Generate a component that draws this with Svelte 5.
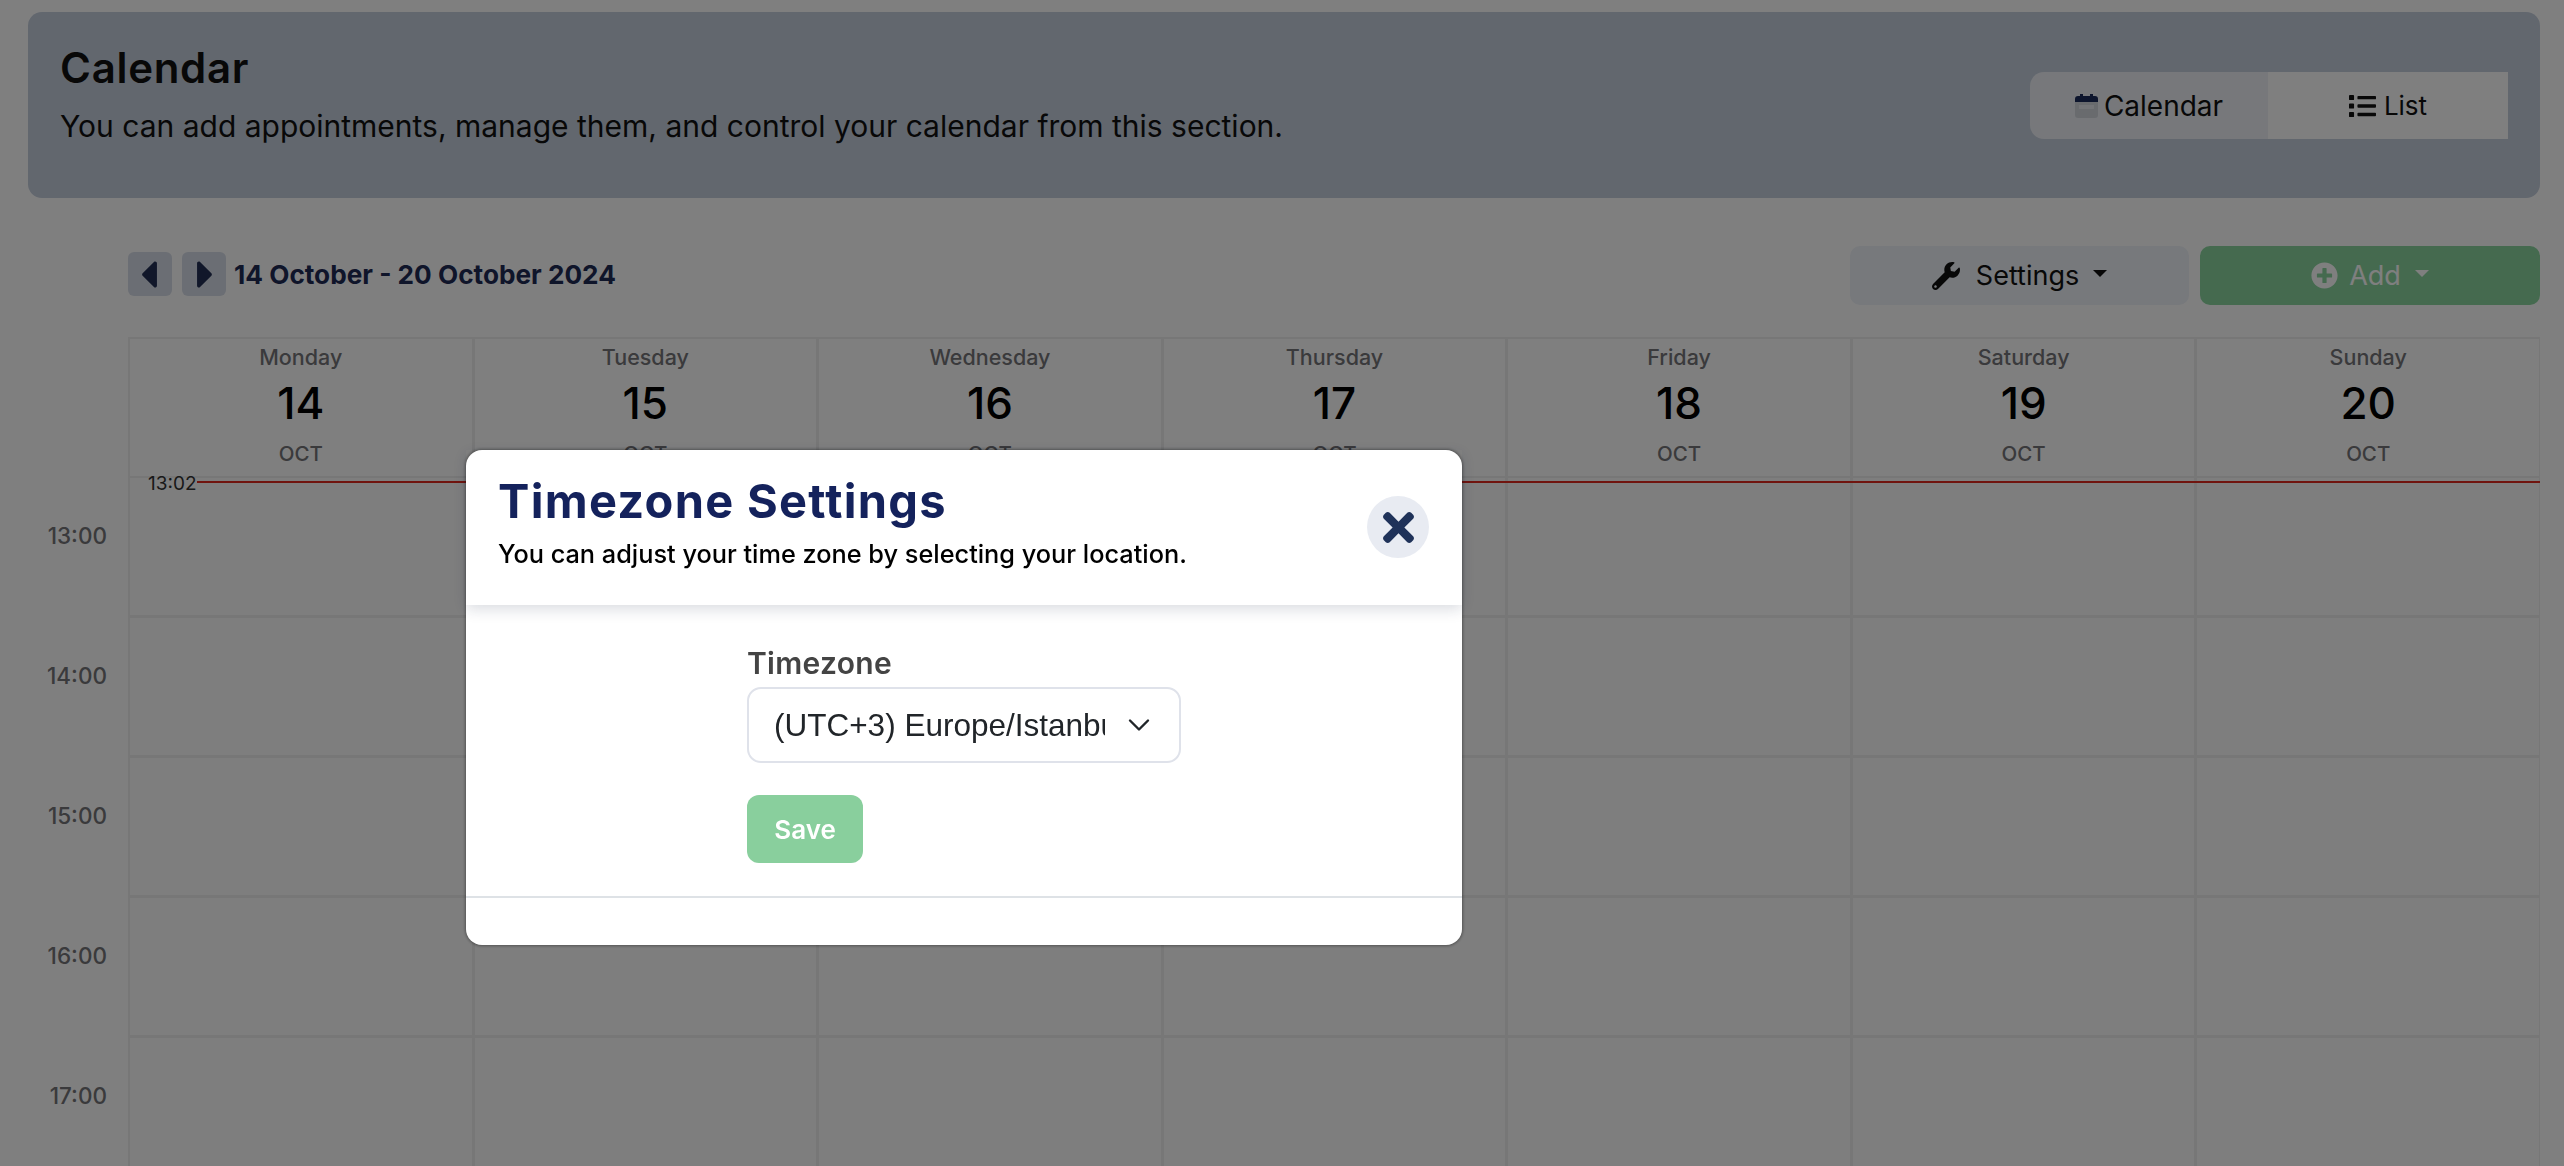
<script>
  const days = [
    { name: 'Monday', num: 14 },
    { name: 'Tuesday', num: 15 },
    { name: 'Wednesday', num: 16 },
    { name: 'Thursday', num: 17 },
    { name: 'Friday', num: 18 },
    { name: 'Saturday', num: 19 },
    { name: 'Sunday', num: 20 }
  ];
  const hours = ['13:00', '14:00', '15:00', '16:00', '17:00'];
</script>

<div class="page">
  <header class="banner">
    <div>
      <h1>Calendar</h1>
      <p>You can add appointments, manage them, and control your calendar from this section.</p>
    </div>
    <div class="toggle">
      <button class="tab active">
        <svg class="cal" viewBox="0 0 23 25" aria-hidden="true">
          <path fill="#d3d6dd" d="M0 9h23v13a3 3 0 0 1-3 3H3a3 3 0 0 1-3-3z" />
          <rect x="4" y="12" width="15" height="4" fill="#e6e8ee" />
          <path fill="#1a2a5a" d="M0 9V6a3 3 0 0 1 3-3h2V1h3v2h7V1h3v2h2a3 3 0 0 1 3 3v3z" />
        </svg>
        Calendar
      </button>
      <button class="tab">
        <svg class="list" viewBox="0 48 512 416" aria-hidden="true">
          <path d="M80 368H16a16 16 0 0 0-16 16v64a16 16 0 0 0 16 16h64a16 16 0 0 0 16-16v-64a16 16 0 0 0-16-16zm0-320H16A16 16 0 0 0 0 64v64a16 16 0 0 0 16 16h64a16 16 0 0 0 16-16V64a16 16 0 0 0-16-16zm0 160H16a16 16 0 0 0-16 16v64a16 16 0 0 0 16 16h64a16 16 0 0 0 16-16v-64a16 16 0 0 0-16-16zm416 176H176a16 16 0 0 0-16 16v32a16 16 0 0 0 16 16h320a16 16 0 0 0 16-16v-32a16 16 0 0 0-16-16zm0-320H176a16 16 0 0 0-16 16v32a16 16 0 0 0 16 16h320a16 16 0 0 0 16-16V80a16 16 0 0 0-16-16zm0 160H176a16 16 0 0 0-16 16v32a16 16 0 0 0 16 16h320a16 16 0 0 0 16-16v-32a16 16 0 0 0-16-16z" />
        </svg>
        List
      </button>
    </div>
  </header>

  <div class="toolbar">
    <div class="nav">
      <button class="arrow prev" aria-label="Previous">
        <svg viewBox="0 0 192 512"><path d="M192 127.338v257.324c0 17.818-21.543 26.741-34.142 14.142L29.196 270.142c-7.81-7.81-7.81-20.474 0-28.284l128.662-128.662c12.599-12.6 34.142-3.676 34.142 14.142z" /></svg>
      </button>
      <button class="arrow next" aria-label="Next">
        <svg viewBox="0 0 192 512"><path d="M0 384.662V127.338c0-17.818 21.543-26.741 34.142-14.142l128.662 128.662c7.81 7.81 7.81 20.474 0 28.284L34.142 398.804C21.543 411.404 0 402.48 0 384.662z" /></svg>
      </button>
      <strong class="range">14 October - 20 October 2024</strong>
    </div>
    <div class="actions">
      <button class="action settings">
        <svg class="ic" viewBox="0 0 512 512"><path d="M507.73 109.1c-2.24-9.03-13.54-12.09-20.12-5.51l-74.36 74.36-67.88-11.31-11.31-67.88 74.36-74.36c6.62-6.62 3.43-17.9-5.66-20.16-47.38-11.74-99.55.91-136.58 37.93-39.64 39.64-50.55 97.1-34.05 147.2L18.74 402.76c-24.99 24.99-24.99 65.51 0 90.5 24.99 24.99 65.51 24.99 90.5 0l213.21-213.21c50.12 16.71 107.47 5.68 147.37-34.22 37.07-37.07 49.7-89.32 37.91-136.73zM64 472c-13.25 0-24-10.75-24-24 0-13.26 10.75-24 24-24s24 10.74 24 24c0 13.25-10.75 24-24 24z" /></svg>
        <span class="lbl">Settings</span>
        <i class="caret"></i>
      </button>
      <button class="action add">
        <svg class="ic" viewBox="0 0 512 512"><path d="M256 8C119 8 8 119 8 256s111 248 248 248 248-111 248-248S393 8 256 8zm144 276c0 6.6-5.4 12-12 12h-92v92c0 6.6-5.4 12-12 12h-56c-6.6 0-12-5.4-12-12v-92h-92c-6.6 0-12-5.4-12-12v-56c0-6.6 5.4-12 12-12h92v-92c0-6.6 5.4-12 12-12h56c6.6 0 12 5.4 12 12v92h92c6.6 0 12 5.4 12 12v56z" /></svg>
        <span class="lbl">Add</span>
        <i class="caret"></i>
      </button>
    </div>
  </div>

  <section class="cal-grid">
    <div class="corner"></div>
    {#each days as d}
      <div class="day">
        <span class="dname">{d.name}</span>
        <span class="dnum">{d.num}</span>
        <span class="dmon">OCT</span>
      </div>
    {/each}
    <div class="now">
      <span class="now-label">13:02</span>
      <span class="now-line"></span>
    </div>
    {#each hours as h}
      <div class="hour"><span>{h}</span></div>
      {#each days as d}
        <div class="slot"></div>
      {/each}
    {/each}
  </section>
</div>

<div class="backdrop"></div>

<div class="modal" role="dialog">
  <div class="m-head">
    <div>
      <h2>Timezone Settings</h2>
      <p>You can adjust your time zone by selecting your location.</p>
    </div>
    <button class="close" aria-label="Close">
      <svg viewBox="0 0 352 512"><path d="M242.72 256l100.07-100.07c12.28-12.28 12.28-32.19 0-44.48l-22.24-22.24c-12.28-12.28-32.19-12.28-44.48 0L176 189.28 75.93 89.21c-12.28-12.28-32.19-12.28-44.48 0L9.21 111.45c-12.28 12.28-12.28 32.19 0 44.48L109.28 256 9.21 356.07c-12.28 12.28-12.28 32.19 0 44.48l22.24 22.24c12.28 12.28 32.2 12.28 44.48 0L176 322.72l100.07 100.07c12.28 12.28 32.2 12.28 44.48 0l22.24-22.24c12.28-12.28 12.28-32.19 0-44.48L242.72 256z" /></svg>
    </button>
  </div>
  <div class="m-body">
    <label for="tz">Timezone</label>
    <div class="select-wrap">
      <select id="tz">
        <option>(UTC+3) Europe/Istanbul</option>
      </select>
      <svg class="chev" viewBox="0 0 16 16"><path d="M2 5l6 6 6-6" fill="none" stroke="#212529" stroke-width="1.6" stroke-linecap="round" stroke-linejoin="round" /></svg>
    </div>
    <button class="save">Save</button>
  </div>
  <div class="m-foot"></div>
</div>

<style>
  :global(body) {
    margin: 0;
    background: #fff;
    font-family: Inter, "Noto Sans", sans-serif;
    overflow: hidden;
  }
  button {
    font-family: inherit;
    border: 0;
    padding: 0;
    margin: 0;
    color: inherit;
  }
  .page {
    height: 1166px;
    overflow: hidden;
    padding-top: 12px;
    box-sizing: border-box;
  }
  .banner {
    margin: 0 24px 0 28px;
    height: 186px;
    box-sizing: border-box;
    background: #c4cedd;
    border-radius: 14px;
    padding: 0 32px;
    display: flex;
    align-items: center;
    justify-content: space-between;
  }
  .banner > div:first-child {
    margin-bottom: 18px;
  }
  h1 {
    margin: 0 0 16px;
    font-size: 42px;
    line-height: 44px;
    font-weight: 600;
    color: #111;
    letter-spacing: 0.7px;
  }
  .banner p {
    margin: 0;
    font-size: 30px;
    line-height: 40px;
    font-weight: 400;
    color: #111;
  }
  .toggle {
    display: flex;
    height: 67px;
    margin-bottom: -1px;
  }
  .tab {
    display: flex;
    align-items: center;
    justify-content: center;
    gap: 8px;
    font-size: 26px;
    color: #111;
    background: #fff;
    width: 240px;
  }
  .tab.active {
    width: 238px;
    font-size: 28px;
    gap: 6px;
    background: #eef1f6;
    border-radius: 14px 0 0 14px;
  }
  .cal {
    width: 23px;
    height: 25px;
  }
  .list {
    width: 27px;
    height: 22px;
    fill: #111;
  }
  .toolbar {
    margin: 48px 24px 0 128px;
    height: 59px;
    display: flex;
    justify-content: space-between;
    align-items: flex-start;
  }
  .nav {
    display: flex;
    align-items: center;
    height: 56px;
    gap: 10px;
  }
  .arrow {
    width: 44px;
    height: 44px;
    border-radius: 6px;
    background: #d7dde8;
    display: flex;
    align-items: center;
    justify-content: center;
  }
  .arrow svg {
    height: 45px;
    width: 17px;
    fill: #222f55;
  }
  .prev svg {
    margin-right: 3px;
  }
  .next svg {
    margin-left: 3px;
  }
  .range {
    font-size: 26.2px;
    font-weight: 700;
    color: #1e2a55;
    margin-left: -2px;
  }
  .actions {
    display: flex;
    gap: 11px;
  }
  .action {
    width: 340px;
    height: 59px;
    border-radius: 10px;
    display: flex;
    align-items: center;
    justify-content: center;
    font-size: 27px;
  }
  .settings {
    background: #eef2f8;
    color: #111;
    width: 339px;
  }
  .add {
    background: #8bd59f;
    color: #fff;
  }
  .settings .ic {
    width: 28px;
    height: 28px;
    fill: #111;
    margin-right: 16px;
  }
  .add .ic {
    width: 27px;
    height: 27px;
    fill: #fff;
    margin-right: 11px;
  }
  .caret {
    width: 0;
    height: 0;
    border-top: 7px solid currentColor;
    border-left: 7px solid transparent;
    border-right: 7px solid transparent;
    margin-left: 14px;
    margin-bottom: 4px;
  }
  .cal-grid {
    margin: 32px 24px 0 0;
    display: grid;
    grid-template-columns: 128px repeat(7, 1fr);
    grid-template-rows: 141px 0 repeat(5, 140px);
    position: relative;
  }
  .corner {
    background: #fff;
  }
  .day {
    display: flex;
    flex-direction: column;
    align-items: center;
    border: 2px solid #eeeeee;
    border-right-width: 1px;
    box-sizing: border-box;
    background: #fff;
  }
  .dname {
    font-size: 21.5px;
    line-height: 28px;
    margin-top: 4px;
    color: #747478;
    font-weight: 500;
  }
  .dnum {
    font-size: 44px;
    line-height: 56px;
    margin-top: 4px;
    font-weight: 500;
    color: #000;
  }
  .dmon {
    font-size: 20.5px;
    line-height: 26px;
    margin-top: 10px;
    color: #747478;
    font-weight: 500;
  }
  .now {
    grid-column: 1 / -1;
    position: relative;
    z-index: 2;
  }
  .now-label {
    position: absolute;
    left: 148px;
    top: -1px;
    line-height: 14px;
    font-size: 19px;
    color: #333;
  }
  .now-line {
    position: absolute;
    left: 197px;
    right: 0;
    top: 3px;
    height: 2px;
    background: #e0281c;
  }
  .hour {
    display: flex;
    align-items: flex-start;
    justify-content: flex-end;
    padding: 45px 21px 0 0;
    font-size: 22.5px;
    line-height: 26px;
    font-weight: 500;
    color: #747478;
    background: #fff;
    box-sizing: border-box;
  }
  .slot {
    background: #fcfcfc;
    border-left: 2px solid #eeeeee;
    border-right: 1px solid #eeeeee;
    border-bottom: 3px solid #eeeeee;
    box-sizing: border-box;
  }
  .backdrop {
    position: fixed;
    inset: 0;
    z-index: 10;
    background: rgba(0, 0, 0, 0.5);
  }
  .modal {
    position: fixed;
    z-index: 11;
    left: 466px;
    top: 450px;
    width: 996px;
    height: 495px;
    box-sizing: border-box;
    background: #fff;
    border-radius: 16px;
    display: flex;
    flex-direction: column;
    box-shadow: 0 0 3px 1px rgba(0, 0, 0, 0.35);
  }
  .m-head {
    height: 155px;
    flex: none;
    box-sizing: border-box;
    padding: 24px 33px 0 32px;
    display: flex;
    justify-content: space-between;
    align-items: flex-start;
    box-shadow: 0 4px 14px rgba(20, 30, 60, 0.16);
    position: relative;
  }
  h2 {
    margin: 0;
    font-size: 47px;
    line-height: 54px;
    font-weight: 700;
    color: #14225c;
    letter-spacing: 1.3px;
  }
  .m-head p {
    margin: 9px 0 0;
    font-size: 25.3px;
    line-height: 34px;
    font-weight: 500;
    color: #000;
  }
  .close {
    width: 62px;
    height: 62px;
    border-radius: 50%;
    background: #e8ebf2;
    display: flex;
    align-items: center;
    justify-content: center;
    margin-top: 22px;
  }
  .close svg {
    width: 31px;
    height: 45px;
    fill: #1f3259;
  }
  .m-body {
    flex: 1;
    padding: 38px 0 0 281px;
    display: flex;
    flex-direction: column;
    align-items: flex-start;
  }
  label {
    font-size: 30px;
    line-height: 40px;
    font-weight: 600;
    color: #444;
    letter-spacing: 0.3px;
  }
  .select-wrap {
    position: relative;
    margin-top: 4px;
    width: 434px;
    height: 76px;
  }
  select {
    appearance: none;
    -webkit-appearance: none;
    width: 100%;
    height: 100%;
    box-sizing: border-box;
    border: 2px solid #dfe2ea;
    border-radius: 14px;
    background: #fff;
    font-family: "Liberation Sans", Arial, sans-serif;
    font-size: 31.5px;
    color: #212529;
    padding: 0 74px 0 25px;
  }
  .chev {
    position: absolute;
    left: 380px;
    top: 26px;
    width: 24px;
    height: 24px;
    pointer-events: none;
  }
  .save {
    margin-top: 32px;
    width: 116px;
    height: 68px;
    border-radius: 12px;
    background: #89cf9d;
    color: #fff;
    font-size: 26px;
    font-weight: 600;
  }
  .m-foot {
    flex: none;
    height: 49px;
    box-sizing: border-box;
    border-top: 2px solid #dee2e6;
  }
</style>
